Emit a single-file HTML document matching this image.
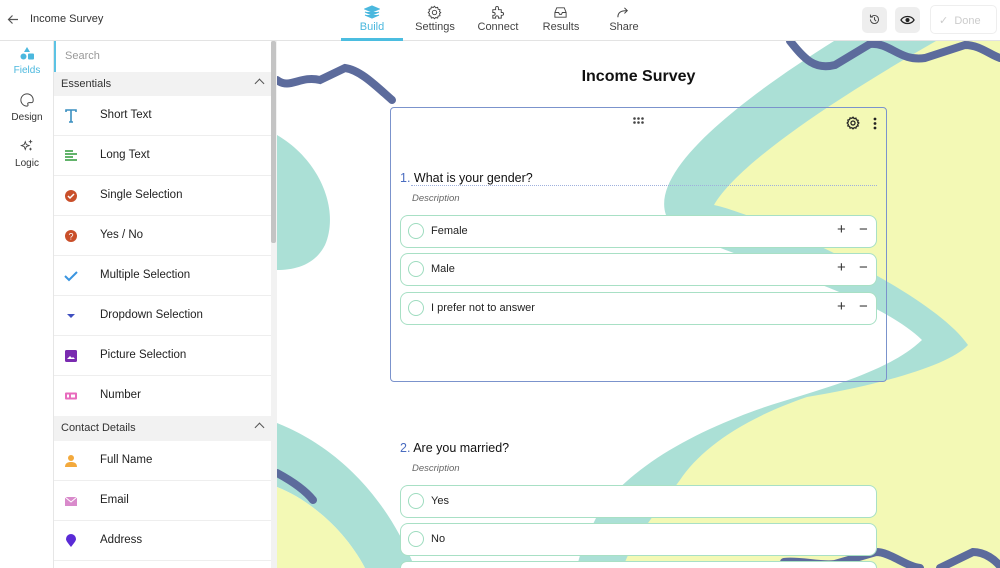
<!DOCTYPE html>
<html style="overflow:hidden"><head><meta charset="utf-8"><style>
*{box-sizing:border-box;margin:0;padding:0}
html,body{width:1000px;height:568px;overflow:hidden}
body{font-family:"Liberation Sans",sans-serif;background:#fff;position:relative;color:#333}
.hdr{position:absolute;left:0;top:0;width:1000px;height:41px;border-bottom:1px solid #e3e3e3;background:#fff}
.tab{position:absolute;top:0;width:62px;height:41px;text-align:center;font-size:11px;color:#444}
.tab svg{position:absolute;left:23px;top:5px}
.tab span{position:absolute;left:0;right:0;top:21px}
.rail{position:absolute;left:0;top:41px;width:54px;height:527px;border-right:1px solid #e6e6e6;background:#fff}
.ri{position:absolute;left:0;width:54px;text-align:center;font-size:10px;color:#333}
.panel{position:absolute;left:54px;top:41px;width:217px;height:527px;background:#fff}
.sec{position:absolute;left:0;width:217px;height:24px;background:#f2f2f2;font-size:11px;color:#333;padding:6px 7px}
.sec i{position:absolute;right:8px;top:8px;width:7px;height:7px;border-left:1.3px solid #555;border-top:1.3px solid #555;transform:rotate(45deg)}
.it{position:absolute;left:0;width:217px;height:40px;border-bottom:1px solid #eee;font-size:11.5px;color:#222}
.it span{position:absolute;left:46px;top:13px}
.it svg{position:absolute;left:10px;top:13px}
.cv{position:absolute;left:277px;top:41px;width:723px;height:527px;overflow:hidden}
.opt{position:absolute;left:400px;width:477px;height:33px;border:1.5px solid #a8e0c5;border-radius:8px;background:#fff;font-size:11px;color:#222}
.opt i{position:absolute;left:7px;top:7px;width:16px;height:16px;border:1.5px solid #9edcbf;border-radius:50%}
.opt span{position:absolute;left:30px;top:9px}
.opt b{position:absolute;top:5px;font-weight:normal;font-size:15px;color:#333}
</style></head><body>

<div class="cv">
<svg width="723" height="527" viewBox="277 41 723 527">
<path d="M834 41 C740 100 650 170 666 215 C680 250 860 280 922 340 C880 380 790 395 738 417 C680 440 630 470 600 510 C590 530 580 550 577 568 L1000 568 L1000 41Z" fill="#abe0d6"/>
<path d="M936 41 C850 90 740 160 714 205 C760 215 930 290 968 345 C950 365 880 385 807 397 C740 420 700 450 680 480 C650 520 630 545 623 568 L1000 568 L1000 41Z" fill="#f3f9b5"/>
<path d="M277 135 C320 160 340 210 325 245 C315 265 295 270 277 270Z" fill="#abe0d6"/>
<path d="M277 423 C320 440 380 480 415 568 L365 568 C345 530 310 500 277 487Z" fill="#abe0d6"/>
<path d="M277 487 C310 500 345 530 365 568 L277 568Z" fill="#f3f9b5"/>
<path d="M277 80 C290 90 300 75 320 80 L345 68 C360 70 375 85 392 100" fill="none" stroke="#5c6b9c" stroke-width="8" stroke-linecap="round"/>
<path d="M790 41 C805 60 815 70 835 65 L870 44 C890 42 900 62 925 58 L965 45 C980 45 990 55 1000 58" fill="none" stroke="#5c6b9c" stroke-width="8" stroke-linecap="round"/>
<path d="M277 473 C290 480 305 490 313 500" fill="none" stroke="#5c6b9c" stroke-width="8" stroke-linecap="round"/>
<path d="M784 562 C800 560 820 566 835 564 L876 552 C890 552 905 566 920 568 M940 568 L973 552 C985 552 995 560 1000 566" fill="none" stroke="#5c6b9c" stroke-width="8" stroke-linecap="round"/>
</svg>
</div>

<div style="position:absolute;left:390px;top:68px;width:497px;text-align:center;font-size:16px;font-weight:bold;color:#111">Income Survey</div>
<div style="position:absolute;left:390px;top:107px;width:497px;height:275px;border:1px solid #7b93cc;border-radius:4px"></div>
<svg style="position:absolute;left:633px;top:117px" width="11" height="8"><g fill="#444"><circle cx="1.5" cy="1.5" r="1.3"/><circle cx="5.5" cy="1.5" r="1.3"/><circle cx="9.5" cy="1.5" r="1.3"/><circle cx="1.5" cy="5.5" r="1.3"/><circle cx="5.5" cy="5.5" r="1.3"/><circle cx="9.5" cy="5.5" r="1.3"/></g></svg>
<svg style="position:absolute;left:846px;top:116px" width="14" height="14" viewBox="0 0 24 24"><path d="M12 2l2 2.5 3-.8.8 3 3 .8-.8 3L22 12l-2 2 .8 3-3 .8-.8 3-3-.8L12 22l-2-2-3 .8-.8-3-3-.8.8-3L2 12l2-2-.8-3 3-.8.8-3 3 .8z" fill="none" stroke="#222" stroke-width="2.2"/><circle cx="12" cy="12" r="3.5" fill="none" stroke="#222" stroke-width="2.2"/></svg>
<svg style="position:absolute;left:873px;top:117px" width="4" height="13"><g fill="#222"><circle cx="2" cy="2" r="1.4"/><circle cx="2" cy="6.5" r="1.4"/><circle cx="2" cy="11" r="1.4"/></g></svg>
<div style="position:absolute;left:400px;top:171px;font-size:12.5px;color:#111"><span style="color:#4a6cc0">1.</span> What is your gender?</div>
<div style="position:absolute;left:411px;top:185px;width:466px;border-top:1.5px dotted #9fb0dd"></div>
<div style="position:absolute;left:412px;top:193px;font-size:9.5px;font-style:italic;color:#666">Description</div>
<div class="opt" style="top:215px"><i></i><span>Female</span><b style="left:436px">+</b><b style="left:458px">−</b></div>
<div class="opt" style="top:253px"><i></i><span>Male</span><b style="left:436px">+</b><b style="left:458px">−</b></div>
<div class="opt" style="top:292px"><i></i><span>I prefer not to answer</span><b style="left:436px">+</b><b style="left:458px">−</b></div>
<div style="position:absolute;left:400px;top:441px;font-size:12.5px;color:#111"><span style="color:#4a6cc0">2.</span> Are you married?</div>
<div style="position:absolute;left:412px;top:463px;font-size:9.5px;font-style:italic;color:#666">Description</div>
<div class="opt" style="top:485px"><i></i><span>Yes</span></div>
<div class="opt" style="top:523px"><i></i><span>No</span></div>
<div class="opt" style="top:561px;height:7px;border-bottom:none;border-radius:8px 8px 0 0"></div>

<div class="hdr">
<svg style="position:absolute;left:7px;top:14px" width="12" height="11" viewBox="0 0 12 11"><path d="M11 5.5H1.5M5.5 1.5L1.5 5.5l4 4" fill="none" stroke="#555" stroke-width="1.2"/></svg>
<div style="position:absolute;left:30px;top:13px;font-size:11px;color:#333">Income Survey</div>
<div class="tab" style="left:341px;color:#4bb8de"><svg width="16" height="15" viewBox="0 0 16 15"><path d="M8 1L15 4 8 7 1 4z M1 7l7 3 7-3 M1 10l7 3 7-3" fill="#4bb8de" stroke="#4bb8de" stroke-width="1.2"/></svg><span>Build</span><div style="position:absolute;left:0;bottom:0;width:62px;height:3px;background:#4bbde0"></div></div>
<div class="tab" style="left:404px"><svg width="15" height="15" viewBox="0 0 24 24"><path d="M12 2l2 2.5 3-.8.8 3 3 .8-.8 3L22 12l-2 2 .8 3-3 .8-.8 3-3-.8L12 22l-2-2-3 .8-.8-3-3-.8.8-3L2 12l2-2-.8-3 3-.8.8-3 3 .8z" fill="none" stroke="#444" stroke-width="1.5"/><circle cx="12" cy="12" r="3.5" fill="none" stroke="#444" stroke-width="1.5"/></svg><span>Settings</span></div>
<div class="tab" style="left:467px"><svg width="15" height="15" viewBox="0 0 16 16"><path d="M3 5h3V3a1.5 1.5 0 013 0v2h3v3h1a1.5 1.5 0 010 3h-1v3H9v-1a1.5 1.5 0 00-3 0v1H3v-3h1a1.5 1.5 0 000-3H3z" fill="none" stroke="#444" stroke-width="1"/></svg><span>Connect</span></div>
<div class="tab" style="left:530px"><svg width="15" height="15" viewBox="0 0 16 16"><path d="M2 8l2-5h8l2 5v5H2z M2 8h4l1 2h2l1-2h4" fill="none" stroke="#444" stroke-width="1"/></svg><span>Results</span></div>
<div class="tab" style="left:593px"><svg width="15" height="15" viewBox="0 0 16 16"><path d="M2 13c0-5 3-7 10-7M9 3l3 3-3 3" fill="none" stroke="#444" stroke-width="1.1"/></svg><span>Share</span></div>
<div style="position:absolute;left:862px;top:7px;width:25px;height:26px;background:#eee;border-radius:5px"><svg style="position:absolute;left:6px;top:6px" width="13" height="13" viewBox="0 0 16 16"><path d="M3 8a5 5 0 105-5 5 5 0 00-4 2M3 2v3h3M8 5v3l2 2" fill="none" stroke="#444" stroke-width="1.2"/></svg></div>
<div style="position:absolute;left:895px;top:7px;width:25px;height:26px;background:#eee;border-radius:5px"><svg style="position:absolute;left:5px;top:8px" width="15" height="10" viewBox="0 0 16 10"><path d="M1 5c3-5 11-5 14 0-3 5-11 5-14 0z" fill="none" stroke="#222" stroke-width="1.3"/><circle cx="8" cy="5" r="2.2" fill="#222"/></svg></div>
<div style="position:absolute;left:930px;top:5px;width:67px;height:29px;border:1.5px solid #eee;border-radius:5px;font-size:11px;color:#ccc;padding:8px 0 0 8px">✓&nbsp;&nbsp;Done</div>
</div>

<div class="rail">
<div class="ri" style="top:6px;color:#4bb8de"><svg width="14" height="13" viewBox="0 0 14 13"><path d="M7 0l3 5H4z" fill="#4bb8de"/><circle cx="3.5" cy="9.5" r="3" fill="#4bb8de"/><rect x="8" y="6.5" width="6" height="6" rx="1" fill="#4bb8de"/></svg><div style="margin-top:2px">Fields</div></div>
<div class="ri" style="top:52px"><svg width="14" height="14" viewBox="0 0 16 16"><path d="M8 1a7 7 0 000 14c1 0 1.5-1 1-2s0-2 1.5-2H13a2 2 0 002-2A7 7 0 008 1z" fill="none" stroke="#444" stroke-width="1.1"/></svg><div style="margin-top:2px">Design</div></div>
<div class="ri" style="top:98px"><svg width="14" height="14" viewBox="0 0 16 16"><path d="M6 3l1.2 3.3L10.5 7.5 7.2 8.7 6 12 4.8 8.7 1.5 7.5 4.8 6.3z M12 1v4M10 3h4M12 10v3M10.5 11.5h3" fill="none" stroke="#444" stroke-width="1"/></svg><div style="margin-top:2px">Logic</div></div>
</div>

<div class="panel">
<div style="position:absolute;left:0;top:0;width:2px;height:44px;background:#5cc3e4"></div>
<div style="position:absolute;left:11px;top:9px;font-size:11px;color:#999">Search</div>
<div class="sec" style="top:31px">Essentials<i></i></div>
<div class="it" style="top:55px"><svg width="14" height="14" viewBox="0 0 14 14"><path d="M2 3V1h10v2M7 1v12M5 13h4" fill="none" stroke="#3a8fc0" stroke-width="1.6"/></svg><span>Short Text</span></div>
<div class="it" style="top:95px"><svg width="14" height="14" viewBox="0 0 14 14"><path d="M1 2h8M1 5h12M1 8h8M1 11h12" stroke="#2e9a3a" stroke-width="1.6"/></svg><span>Long Text</span></div>
<div class="it" style="top:135px"><svg width="14" height="14"><circle cx="7" cy="7" r="6" fill="#c94f2a"/><path d="M4 7l2 2 4-4" fill="none" stroke="#fff" stroke-width="1.5"/></svg><span>Single Selection</span></div>
<div class="it" style="top:175px"><svg width="14" height="14"><circle cx="7" cy="7" r="6" fill="#c94f2a"/><text x="4.5" y="10.5" font-size="9" fill="#fff" font-family="Liberation Sans">?</text></svg><span>Yes / No</span></div>
<div class="it" style="top:215px"><svg width="14" height="14"><path d="M1 7l4 4 8-8" fill="none" stroke="#3a95e0" stroke-width="2"/></svg><span>Multiple Selection</span></div>
<div class="it" style="top:255px"><svg width="14" height="14"><path d="M3 5h8l-4 4z" fill="#3f4fc0"/></svg><span>Dropdown Selection</span></div>
<div class="it" style="top:295px"><svg width="14" height="14"><rect x="1" y="1" width="12" height="12" rx="1.5" fill="#7a2bb0"/><path d="M3 10l3-3 2 2 1-1 2 2z" fill="#fff"/></svg><span>Picture Selection</span></div>
<div class="it" style="top:335px;border:none"><svg width="14" height="14"><rect x="1" y="3.5" width="12" height="7" rx="1" fill="#e86bbd"/><rect x="3" y="5.5" width="2" height="3" fill="#fff"/><rect x="7" y="5.5" width="4" height="3" fill="#fff"/></svg><span>Number</span></div>
<div class="sec" style="top:375px;height:25px">Contact Details<i></i></div>
<div class="it" style="top:400px"><svg width="14" height="14"><circle cx="7" cy="4" r="3" fill="#f3a93c"/><path d="M1 13c0-4 3-5 6-5s6 1 6 5z" fill="#f3a93c"/></svg><span>Full Name</span></div>
<div class="it" style="top:440px"><svg width="14" height="14"><rect x="1" y="3" width="12" height="9" fill="#d98acb"/><path d="M1 3l6 5 6-5" fill="none" stroke="#fff" stroke-width="1"/></svg><span>Email</span></div>
<div class="it" style="top:480px"><svg width="14" height="14"><path d="M7 13C4 9 2 7 2 5a5 5 0 0110 0c0 2-2 4-5 8z" fill="#5a2bd6"/></svg><span>Address</span></div>
</div>
<div style="position:absolute;left:271px;top:41px;width:6px;height:527px;background:#f2f2f2"></div>
<div style="position:absolute;left:271px;top:41px;width:5px;height:202px;background:#c4c4c4;border-radius:2px"></div>
</body></html>
